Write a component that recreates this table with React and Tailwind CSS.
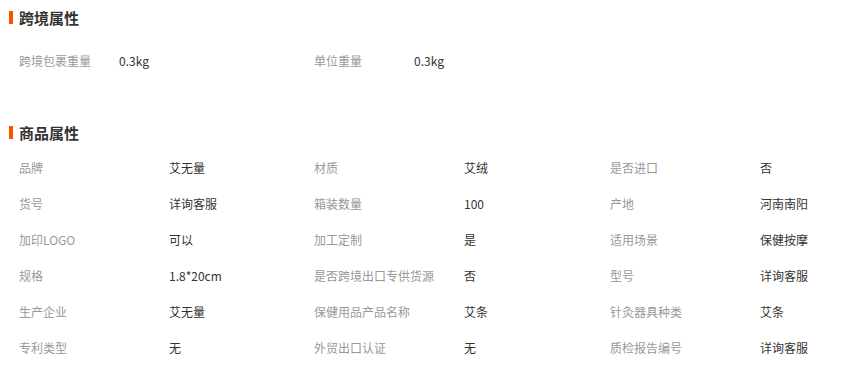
const CROSS = [
  { label: '跨境包裹重量', value: '0.3kg' },
  { label: '单位重量', value: '0.3kg' },
]

const ATTRS = [
  ['品牌', '艾无量'], ['材质', '艾绒'], ['是否进口', '否'],
  ['货号', '详询客服'], ['箱装数量', '100'], ['产地', '河南南阳'],
  ['加印LOGO', '可以'], ['加工定制', '是'], ['适用场景', '保健按摩'],
  ['规格', '1.8*20cm'], ['是否跨境出口专供货源', '否'], ['型号', '详询客服'],
  ['生产企业', '艾无量'], ['保健用品产品名称', '艾条'], ['针灸器具种类', '艾条'],
  ['专利类型', '无'], ['外贸出口认证', '无'], ['质检报告编号', '详询客服'],
]

function Heading({ children }) {
  return (
    <div className="h-[35px] flex items-center pl-[9px]">
      <span className="w-[4px] h-[13px] bg-[#ff5000] mr-[6px]" />
      <span className="text-[15px] font-bold text-[#333] leading-none">{children}</span>
    </div>
  )
}

export default function App() {
  return (
    <div
      className="w-[862px] h-[369px] bg-white overflow-hidden"
      style={{ fontFamily: '"Microsoft YaHei", "Noto Sans CJK SC", "Liberation Sans", sans-serif' }}
    >
      <Heading>跨境属性</Heading>
      <div className="pt-[8px] pl-[19px] grid grid-cols-[295px_296px_1fr]">
        {CROSS.map((a) => (
          <div key={a.label} className="h-9 flex items-center text-[12px]">
            <span className="w-[100px] text-[#999]">{a.label}</span>
            <span className="text-[#333]">{a.value}</span>
          </div>
        ))}
      </div>

      <div className="mt-[36px]">
        <Heading>商品属性</Heading>
        <div className="pl-[19px] grid grid-cols-[295px_296px_1fr]">
          {ATTRS.map(([label, value]) => (
            <div key={label} className="h-9 flex items-center text-[12px]">
              <span className="w-[150px] shrink-0 text-[#999]">{label}</span>
              <span className="text-[#333]">{value}</span>
            </div>
          ))}
        </div>
      </div>
    </div>
  )
}
